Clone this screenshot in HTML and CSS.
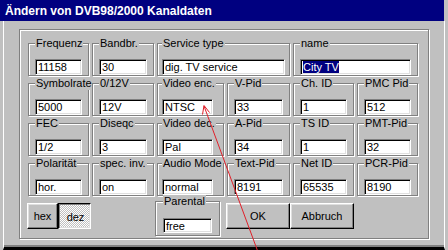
FILE: index.html
```html
<!DOCTYPE html>
<html lang="de">
<head>
    <meta charset="UTF-8">
    <title>Ändern von DVB98/2000 Kanaldaten</title>
    <link rel="stylesheet" href="styles.css">
</head>
<body>
<div class="window">
    <div class="titlebar">Ändern von DVB98/2000 Kanaldaten</div>
    <div class="client">
        <div class="panel">
            <div class="grid">
                <!-- Zeile 1 -->
                <div class="group"><span class="label">Frequenz</span><div class="edit">11158</div></div>
                <div class="group"><span class="label">Bandbr.</span><div class="edit">30</div></div>
                <div class="group mid span2"><span class="label">Service type</span><div class="edit">dig. TV service</div></div>
                <div class="group span2"><span class="label">name</span><div class="edit"><span class="sel">City TV</span></div></div>
                <!-- Zeile 2 -->
                <div class="group"><span class="label">Symbolrate</span><div class="edit">5000</div></div>
                <div class="group"><span class="label">0/12V</span><div class="edit">12V</div></div>
                <div class="group mid"><span class="label">Video enc.</span><div class="edit">NTSC</div></div>
                <div class="group"><span class="label">V-Pid</span><div class="edit">33</div></div>
                <div class="group"><span class="label">Ch. ID</span><div class="edit">1</div></div>
                <div class="group"><span class="label">PMC Pid</span><div class="edit">512</div></div>
                <!-- Zeile 3 -->
                <div class="group"><span class="label">FEC</span><div class="edit">1/2</div></div>
                <div class="group"><span class="label">Diseqc</span><div class="edit">3</div></div>
                <div class="group mid"><span class="label">Video dec.</span><div class="edit">Pal</div></div>
                <div class="group"><span class="label">A-Pid</span><div class="edit">34</div></div>
                <div class="group"><span class="label">TS ID</span><div class="edit">1</div></div>
                <div class="group"><span class="label">PMT-Pid</span><div class="edit">32</div></div>
                <!-- Zeile 4 -->
                <div class="group"><span class="label">Polarität</span><div class="edit">hor.</div></div>
                <div class="group"><span class="label">spec. inv.</span><div class="edit">on</div></div>
                <div class="group mid"><span class="label">Audio Mode</span><div class="edit">normal</div></div>
                <div class="group"><span class="label">Text-Pid</span><div class="edit">8191</div></div>
                <div class="group"><span class="label">Net ID</span><div class="edit">65535</div></div>
                <div class="group"><span class="label">PCR-Pid</span><div class="edit">8190</div></div>
                <!-- Zeile 5 -->
                <div class="toggle">
                    <button class="btn">hex</button>
                    <button class="btn pressed">dez</button>
                </div>
                <div class="group parental"><span class="label">Parental</span><div class="edit">free</div></div>
                <div class="actions">
                    <button class="btn">OK</button>
                    <button class="btn">Abbruch</button>
                </div>
            </div>
        </div>
    </div>
    <svg class="arrow" width="448" height="250" viewBox="0 0 448 250">
        <line x1="204" y1="106" x2="258" y2="252" stroke="#e0202a" stroke-width="1"/>
        <polyline points="202.5,114.5 204,105.5 209.5,112.5" fill="none" stroke="#e0202a" stroke-width="1"/>
    </svg>
</div>
</body>
</html>
```

FILE: styles.css
```css
* {
    margin: 0;
    padding: 0;
    box-sizing: border-box;
}
body {
    background: #c0c0c0;
    font-family: 'Liberation Sans', Arial, sans-serif;
    font-size: 11px;
    color: #000;
}
.window {
    position: relative;
    width: 448px;
    height: 250px;
    display: flex;
    flex-direction: column;
    background: #c0c0c0;
    overflow: hidden;
}
.titlebar {/*Titelleiste*/
    height: 21px;
    margin-right: 4px;
    padding: 3px 0 0 5px;
    background: #000080;
    color: #fff;
    font-weight: bold;
    font-size: 12px;
    line-height: 16px;
    white-space: nowrap;
}
.client {
    flex: 1;
    padding: 8px 0 0 15px;
    margin: 0 3px 0 3px;
    border-left: 1px solid #fff;
    border-right: 1px solid #fff;
    border-bottom: 3px solid #000;
    box-shadow: inset 0 -2px 0 #808080;
}
.panel {/*grosser Rahmen*/
    width: 410px;
    height: 210px;
    padding: 13px 0 0 8px;
    border: 1px solid #808080;
    box-shadow: inset 1px 1px 0 #fff, 1px 1px 0 #fff;
}
.grid {
    display: grid;
    grid-template-columns: 61px 62px 67px 63px 61px 61px;
    grid-auto-rows: 33px;
    column-gap: 3px;
    row-gap: 7px;
}
.span2 {
    grid-column: span 2;
}
/*Gruppenrahmen*/
.group {
    border: 1px solid #808080;
    box-shadow: inset 1px 1px 0 #fff, 1px 1px 0 #fff;
    padding: 0 6px;
}
.group.mid {
    padding: 0 4px;
}
.group.mid .edit {
    width: 51px;
}
.group.mid.span2 .edit {
    width: auto;
}
.label {
    display: inline-block;
    margin: -7px 0 0 0;
    padding: 0 1px;
    height: 13px;
    line-height: 13px;
    background: #c0c0c0;
    vertical-align: top;
    white-space: nowrap;
}
.edit {/*Eingabefeld*/
    height: 16px;
    margin-top: 3px;
    padding-left: 2px;
    background: #fff;
    border: 1px solid;
    border-color: #808080 #fff #fff #808080;
    box-shadow: inset 1px 1px 0 #000, inset -1px -1px 0 #dfdfdf;
    line-height: 14px;
    white-space: nowrap;
    overflow: hidden;
}
.sel {
    background: #000080;
    color: #fff;
}
/*Knoepfe*/
.toggle {
    display: flex;
    margin-left: -1px;
    width: 64px;
}
.actions {
    grid-column: span 2;
    display: flex;
    margin-left: -1px;
}
.btn {
    flex: 1;
    height: 26px;
    font-family: inherit;
    font-size: 11px;
    color: #000;
    background: #c0c0c0;
    border: 1px solid;
    border-color: #fff #000 #000 #fff;
    box-shadow: inset -1px -1px 0 #808080, inset 1px 1px 0 #dfdfdf;
}
.btn.pressed {
    border-color: #000 #fff #fff #000;
    box-shadow: inset 1px 1px 0 #808080, inset -1px -1px 0 #dfdfdf;
    background: repeating-conic-gradient(#fff 0 25%, #c0c0c0 0 50%) 0 0 / 2px 2px;
    padding: 2px 0 0 2px;
}
.parental {
    grid-column: 3;
    margin: -2px 0 0 -2px;
    width: 65px;
    height: 35px;
    padding: 0 7px;
}
.parental .edit {
    margin-top: 4px;
    height: 15px;
}
.arrow {/*roter Pfeil*/
    position: absolute;
    left: 0;
    top: 0;
    pointer-events: none;
}
```
